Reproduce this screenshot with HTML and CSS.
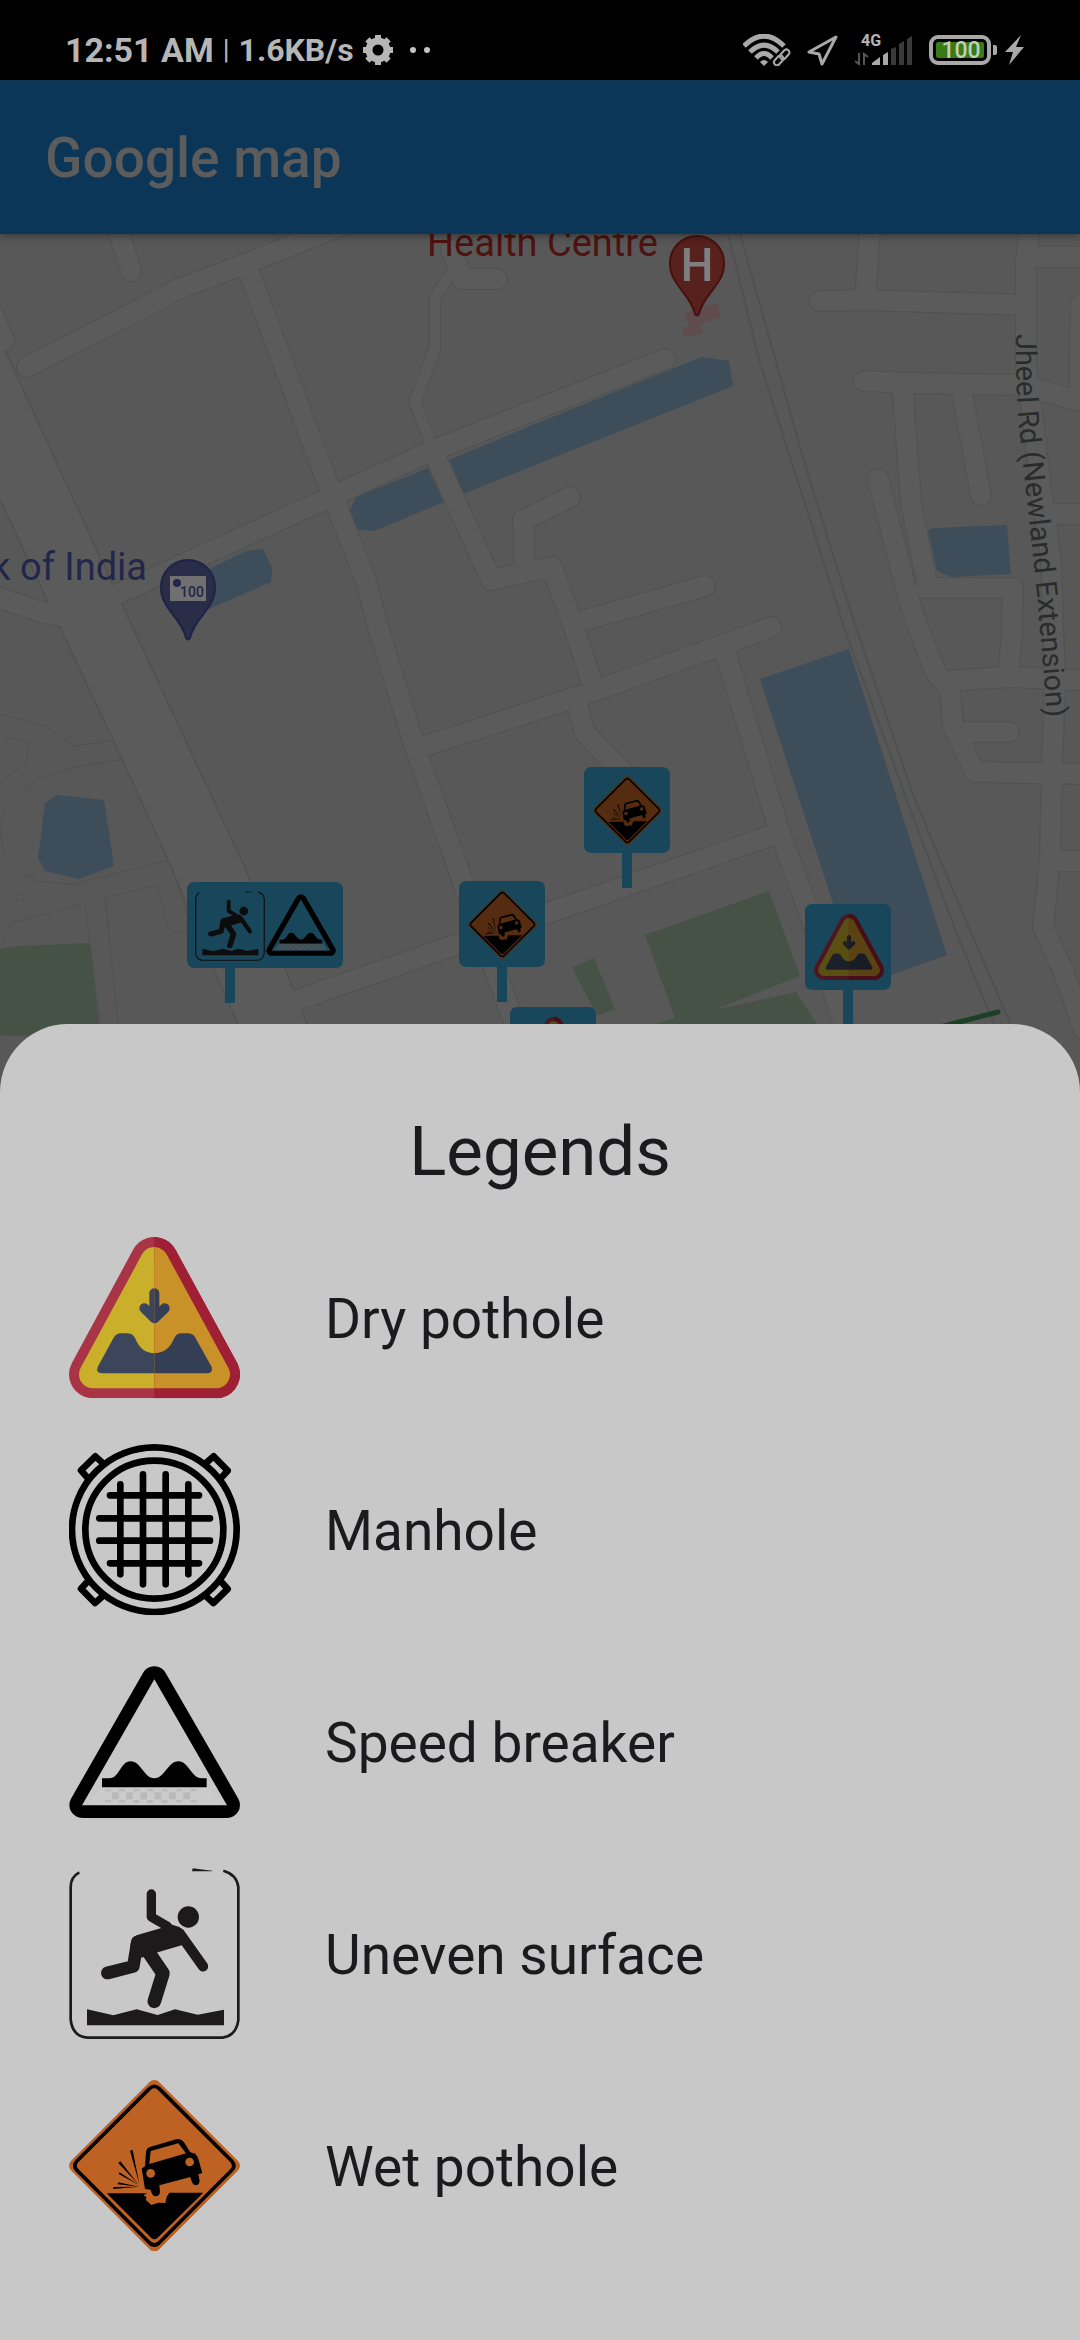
FILE: index.html
```html
<!DOCTYPE html>
<html lang="en">
<head>
<meta charset="utf-8">
<meta name="viewport" content="width=device-width, initial-scale=1">
<title>Google map</title>
<link rel="stylesheet" href="styles.css">
</head>
<body>
<svg class="sprite" aria-hidden="true">
  <defs>
    <clipPath id="right-half"><rect x="313" y="40" width="270" height="520"/></clipPath>
    <g id="dry-board">
      <path class="rim" d="M313 125L498 465H129Z" stroke-width="144"/>
      <path class="face" d="M313 125L498 465H129Z" stroke-width="84"/>
      <path class="ink" stroke="none" d="M155 462Q137 460 143 443L190 357Q198 342 213 342H233Q250 342 257 360C268 388 288 402 313 402S360 388 371 360Q378 342 393 342H413Q430 342 437 357L485 443Q490 460 472 462Z"/>
      <path class="ink" fill="none" stroke-width="30" stroke-linecap="round" d="M313 222V290M283 267L313 297L344 267"/>
    </g>
    <symbol id="dry" viewBox="57 53 513 484">
      <use href="#dry-board" class="tone-light"/>
      <g clip-path="url(#right-half)"><use href="#dry-board" class="tone-dark"/></g>
    </symbol>
    <symbol id="manhole" viewBox="57 44 513 514">
      <g fill="none" stroke="#000" stroke-width="20" stroke-linecap="round" stroke-linejoin="round">
        <circle cx="313" cy="301" r="247"/>
        <circle cx="313" cy="301" r="207"/>
        <path d="M180 198H447M148 267H480M148 334H480M180 402H447M211 165V435M279 135V465M347 135V465M415 165V435"/>
        <path id="lug" d="M468 101L491 81L533 124L511 148"/>
        <use href="#lug" transform="rotate(90 313 301)"/>
        <use href="#lug" transform="rotate(180 313 301)"/>
        <use href="#lug" transform="rotate(270 313 301)"/>
      </g>
    </symbol>
    <symbol id="speed" viewBox="57 47 513 457">
      <path fill="#cdcdcd" fill-opacity=".5" d="M150 412H478L508 464H110Z"/>
      <path fill="#b9b9b9" d="M186 426h20v21h-20zM228 426h20v21h-20zM271 426h20v21h-20zM314 426h20v21h-20zM357 426h20v21h-20zM400 426h20v21h-20zM165 417h18v6h-18zM207 417h18v6h-18zM250 417h18v6h-18zM292 417h18v6h-18zM335 417h18v6h-18zM378 417h18v6h-18zM422 417h18v6h-18zM165 449h18v7h-18zM207 449h18v7h-18zM250 449h18v9h-18zM292 449h18v9h-18zM335 449h18v9h-18zM378 449h18v7h-18zM422 449h18v7h-18z"/>
      <path fill-rule="evenodd" d="M279 68A39 39 0 0 1 347 68L565 445A39 39 0 0 1 531 503H97A39 39 0 0 1 63 445ZM313 87L96 465H531Z"/>
      <path d="M156 384H178C210 384 210 333 242 333S281 384 313 384S353 333 385 333S423 384 455 384H470V411H156Z"/>
    </symbol>
    <symbol id="uneven" viewBox="57 53 513 514">
      <g fill="none" stroke="#1c1a1b" stroke-linecap="round" stroke-linejoin="round">
        <path stroke-width="8" stroke-linecap="butt" d="M88 66Q62 80 62 110V508Q67 558 112 562H518Q558 556 565 510V110Q560 72 520 61"/>
        <path stroke-width="28" d="M304 131V200L352 228"/>
        <path stroke-width="31" d="M388 248L459 348"/>
        <path stroke-width="38" d="M262 275L250 348L172 368"/>
        <path stroke-width="41" d="M292 300L339 369L313 453"/>
      </g>
      <g fill="#1c1a1b">
        <circle cx="415" cy="200" r="32"/>
        <path d="M262 254L334 233L340 215L388 230L404 246L395 285L316 308L275 322L241 290Q243 260 262 254Z"/>
        <path d="M111 477L190 495L260 477L323 494L375 477L443 493L522 478V525H111Z"/>
        <path d="M428 54L486 61V63L426 63Z"/>
      </g>
    </symbol>
    <symbol id="wet" viewBox="57 59 513 514">
      <path fill="#be6224" stroke="#be6224" stroke-width="40" stroke-linejoin="round" d="M313 79L550 316L313 553L77 316Z"/>
      <path fill="none" stroke="#000" stroke-width="11" d="M299 84Q313 72 327 84L545 302Q558 316 545 330L327 548Q313 560 299 548L81 330Q68 316 81 302Z"/>
      <path d="M170 399H292L280 405L290 410L287 418L304 434L325 427L346 428L350 410L358 397H460L322 533Q313 540 304 533Z"/>
      <path d="M275 325L285 317L288 275Q290 262 302 259L378 237Q392 234 401 244L421 276L436 280L444 292L457 338L445 342L449 362Q447 375 436 375Q426 373 421 350L328 375L330 395Q328 408 316 408Q305 405 302 388L285 386Z"/>
      <g fill="#be6224">
        <path d="M302 272L385 249L408 279L298 311Z"/>
        <circle cx="302" cy="339" r="13"/>
        <circle cx="419" cy="305" r="13"/>
      </g>
      <path d="M240 271L248 269L268 372ZM205 308L211 303L266 373ZM206 341L209 336L266 374ZM203 372L205 366L268 379ZM190 386V380L268 379Z"/>
    </symbol>
  </defs>
</svg>

<header>
  <div class="status-bar">
    <span class="clock">12:51 AM</span>
    <span class="divider">|</span>
    <span class="speed-text">1.6KB/s</span>
    <svg class="gear" width="30" height="30" viewBox="0 0 30 30" aria-hidden="true">
      <circle cx="15" cy="15" r="9" fill="none" stroke="#b6b6b6" stroke-width="7"/>
      <g stroke="#b6b6b6" stroke-width="6"><path id="tooth" d="M15 0V5"/><use href="#tooth" transform="rotate(45 15 15)"/><use href="#tooth" transform="rotate(90 15 15)"/><use href="#tooth" transform="rotate(135 15 15)"/><use href="#tooth" transform="rotate(180 15 15)"/><use href="#tooth" transform="rotate(225 15 15)"/><use href="#tooth" transform="rotate(270 15 15)"/><use href="#tooth" transform="rotate(315 15 15)"/></g>
    </svg>
    <svg class="dots" width="22" height="8" viewBox="0 0 22 8" aria-hidden="true"><g fill="#c4c4c4"><circle cx="4" cy="4" r="3"/><circle cx="18" cy="4" r="3"/></g></svg>
    <div class="status-icons">
      <svg width="48" height="32" viewBox="0 0 48 32" role="img" aria-label="Wi-Fi">
        <g fill="none" stroke="#a9a9a9" stroke-width="5">
          <path d="M1 12Q21 -8 41 12"/><path d="M7 18Q21 4 35 18"/><path d="M13 24Q21 15 29 24"/>
        </g>
        <path fill="#a9a9a9" d="M17 28Q21 24 25 28L21 32Z"/>
        <g fill="none" stroke="#000" stroke-width="5"><rect x="35" y="19" width="12" height="6" rx="3" transform="rotate(-48 41 22)"/></g>
        <g fill="none" stroke="#a9a9a9" stroke-width="2"><rect x="36" y="17" width="11" height="6" rx="3" transform="rotate(-48 42 20)"/><rect x="30" y="23" width="11" height="6" rx="3" transform="rotate(-48 36 26)"/></g>
      </svg>
      <svg width="32" height="32" viewBox="0 0 32 32" role="img" aria-label="Location"><path fill="none" stroke="#a9a9a9" stroke-width="3" stroke-linejoin="round" d="M29 3L2 18L12 20L15 30Z"/></svg>
      <svg width="58" height="34" viewBox="0 -2 58 34" role="img" aria-label="4G signal">
        <text class="net-label" x="6" y="11">4G</text>
        <path fill="none" stroke="#565656" stroke-width="2" d="M4 18V29L0 26M9 30V19L13 22"/>
        <path fill="#a9a9a9" d="M17 30V28L25 22V30ZM28 30V20L33 17V30Z"/>
        <path fill="#3a3a3a" d="M36 30V14L41 12V30ZM44 30V9L49 6V30ZM52 30V4L57 1V30Z"/>
      </svg>
      <svg width="96" height="32" viewBox="0 0 96 32" role="img" aria-label="Battery 100, charging">
        <rect x="2" y="3" width="58" height="26" rx="7" fill="none" stroke="#a9a9a9" stroke-width="4"/>
        <rect x="7" y="8" width="48" height="16" rx="2" fill="#377a16"/>
        <path fill="#a9a9a9" d="M64 11H66Q68 11 68 13V19Q68 21 66 21H64ZM92 1L76 18H84L80 31L95 13H87Z"/>
        <text class="battery-label" x="32" y="24">100</text>
      </svg>
    </div>
  </div>
  <div class="app-bar"><h1>Google map</h1></div>
</header>

<main>
  <svg class="map" viewBox="0 234 1080 858" role="img" aria-label="Map with road hazard markers">
    <defs>
      <g id="streets">
        <path d="M27 367L181 288L248 263L340 226M115 220L131 271"/>
        <path d="M249 272L329 487L365 578L379 630L415 747L465 888L495 970L535 1080"/>
        <path d="M100 602L324 500L427 453L540 408L665 359M-20 285L4 340"/>
        <path d="M463 279H497M451 250L463 279M437 460L491 580L552 567L575 630L592 683"/>
        <path d="M525 570L523 520L570 497M582 621L705 586M0 598L45 613L80 620"/>
        <path d="M425 746L592 692L736 640L771 627M726 655L779 830L812 920L860 1080"/>
        <path d="M578 708L585 733L640 790M297 1000L458 944L545 914L776 834"/>
        <path d="M870 230L865 300M820 301L865 300L1026 305M1029 230L1026 263V363L1040 480L1051 560L1053 630L1055 677L1052 773L1050 857L1043 927L1063 970L1084 1030"/>
        <path d="M1036 257H1100M1081 305L1079 400M864 381L915 383L1022 385L1090 404"/>
        <path d="M903 392L911 503L927 583M962 393L981 495M878 479L908 597L919 630L936 673L950 690L953 727L975 772L1100 774"/>
        <path d="M925 588L1013 588L1012 630L1009 670M946 681L1008 677L1100 681M965 732H1009M1053 514H1100M1053 861H1100"/>
      </g>
      <path id="lane" d="M449 277L435 297V348L415 402L432 446"/>
      <path id="avenue" d="M5 352L111 583L133 630L243 865L250 882L293 991L320 1060L255 1060L215 970L169 860L114 740L62 630L0 498L-20 460V330Z"/>
    </defs>
    <rect class="ground" y="234" width="1080" height="858"/>
    <g class="edge">
      <path d="M0 714L46 726L75 746L114 740M0 735L30 743L25 764L0 783M123 759L76 767L38 779L8 803L0 825L3 850L15 869L37 881L74 884L169 860M0 948L12 923L85 903L105 1060M122 1060L105 898L156 885L168 925Q172 934 180 933T187 920M176 878L187 915M16 893L26 898L16 901Z"/>
    </g>
    <g class="water">
      <path d="M356 497L428 468L444 502L374 531L357 529L350 510Z"/>
      <path d="M449 460L540 422L702 357L729 361L733 386L540 463L463 494Z"/>
      <path d="M207 570L246 551L263 549L272 568L271 582L207 610Z"/>
      <path d="M928 530L934 528L1007 525L1011 574L951 577L937 571Z"/>
      <path d="M45 803L57 795L104 800L114 866L79 879L45 871L38 858Z"/>
      <path d="M760 679L849 649L947 955L860 986Z"/>
    </g>
    <g class="park">
      <path d="M0 949L17 946L90 943L99 1024L103 1040L0 1035Z"/>
      <path d="M645 935L769 891L800 976L714 1010L796 992L830 1044L655 1044V1024L675 1018Z"/>
      <path d="M572 967L594 958L615 1009L597 1016Z"/>
    </g>
    <path class="clinic" d="M685 313L717 303L721 317L699 324L703 333L685 338L682 328L689 326Z"/>
    <use href="#avenue" class="casing avenue"/>
    <use href="#lane" class="casing lane"/>
    <use href="#streets" class="casing street"/>
    <use href="#avenue" class="surface avenue"/>
    <use href="#lane" class="surface lane"/>
    <use href="#streets" class="surface street"/>
    <g class="rail">
      <path d="M728 234L760 363L806 507L845 630L905 795L958 937L1005 1050"/>
      <path d="M740 234L762 312L803 458L848 603L857 630L913 795L972 935L1022 1050"/>
    </g>
    <path class="trail" d="M940 1027L998 1012"/>

    <g class="hospital">
      <text class="place" x="427" y="256">Health Centre</text>
      <path class="pin" d="M697 236A27 27 0 0 1 724 264C724 285 703 294 699 314Q697 317 695 314C691 294 670 285 670 264A27 27 0 0 1 697 236Z"/>
      <text class="pin-letter" x="697" y="281">H</text>
    </g>
    <g class="bank">
      <text class="place" x="147" y="580" text-anchor="end">k of India</text>
      <path class="pin" d="M188 560A27 27 0 0 1 215 588C215 609 194 618 190 638Q188 641 186 638C182 618 161 609 161 588A27 27 0 0 1 188 560Z"/>
      <rect x="170" y="576" width="36" height="25" fill="#707070"/>
      <circle cx="177" cy="583" r="4"/>
      <text class="note" x="180" y="597">100</text>
    </g>
    <path id="jheel" fill="none" d="M1016 334Q1015 380 1019 427L1037 593L1049 740"/>
    <text class="road-name"><textPath href="#jheel">Jheel Rd (Newland Extension)</textPath></text>

    <g class="sign">
      <path d="M195 882H335Q343 882 343 890V960Q343 968 335 968H235V1003H225V968H195Q187 968 187 960V890Q187 882 195 882Z"/>
      <use href="#uneven" x="195" y="891" width="70" height="70"/>
      <use href="#speed" x="266" y="894" width="70" height="62"/>
    </g>
    <g class="sign">
      <path d="M467 881H537Q545 881 545 889V959Q545 967 537 967H507V1002H497V967H467Q459 967 459 959V889Q459 881 467 881Z"/>
      <use href="#wet" x="468" y="890" width="69" height="69"/>
    </g>
    <g class="sign">
      <path d="M592 767H662Q670 767 670 775V845Q670 853 662 853H632V888H622V853H592Q584 853 584 845V775Q584 767 592 767Z"/>
      <use href="#wet" x="593" y="776" width="69" height="69"/>
    </g>
    <g class="sign">
      <path d="M813 904H883Q891 904 891 912V982Q891 990 883 990H853V1025H843V990H813Q805 990 805 982V912Q805 904 813 904Z"/>
      <use href="#dry" x="814" y="914" width="70" height="66"/>
    </g>
    <g class="sign">
      <path d="M518 1007H588Q596 1007 596 1015V1085H510V1015Q510 1007 518 1007Z"/>
      <use href="#dry" x="519" y="1017" width="70" height="66"/>
    </g>
  </svg>

  <section class="sheet" aria-labelledby="legends">
    <h2 id="legends">Legends</h2>
    <ul>
      <li><svg viewBox="0 0 513 484" aria-hidden="true"><use href="#dry" width="513" height="484"/></svg><span>Dry pothole</span></li>
      <li><svg viewBox="0 0 513 514" aria-hidden="true"><use href="#manhole" width="513" height="514"/></svg><span>Manhole</span></li>
      <li><svg viewBox="0 0 513 457" aria-hidden="true"><use href="#speed" width="513" height="457"/></svg><span>Speed breaker</span></li>
      <li><svg viewBox="0 0 513 514" aria-hidden="true"><use href="#uneven" width="513" height="514"/></svg><span>Uneven surface</span></li>
      <li><svg viewBox="0 0 513 514" aria-hidden="true"><use href="#wet" width="513" height="514"/></svg><span>Wet pothole</span></li>
    </ul>
  </section>
</main>
</body>
</html>
```
FILE: styles.css
```css
* {
  box-sizing: border-box;
}

body {
  margin: 0;
  min-height: 100vh;
  display: flex;
  flex-direction: column;
  background: #585858;
  color: #1b1b1d;
  font-family: Roboto, "Liberation Sans", sans-serif;
  overflow-x: hidden;
}

.sprite {
  position: absolute;
  width: 0;
  height: 0;
}

/* Top bars */
header {
  position: relative;
  z-index: 1;
  box-shadow: 0 2px 8px rgba(0, 0, 0, 0.4);
}

.status-bar {
  display: flex;
  align-items: center;
  height: 80px;
  padding: 20px 55px 0 65px;
  background: #000;
  color: #b6b6b6;
  font-weight: 700;
  line-height: 40px;
  white-space: nowrap;
}

.clock {
  font-size: 34px;
}

.divider {
  margin: 0 9px;
  font-size: 28px;
  font-weight: 400;
}

.speed-text {
  font-size: 32px;
}

.gear {
  margin-left: 9px;
}

.dots {
  margin-left: 16px;
}

.status-icons {
  display: flex;
  align-items: center;
  gap: 16px;
  margin-left: auto;
}

.net-label {
  fill: #b6b6b6;
  font-size: 16px;
  font-weight: 700;
}

.battery-label {
  fill: #bfcfb8;
  font-size: 23px;
  font-weight: 500;
  text-anchor: middle;
}

.app-bar {
  display: flex;
  align-items: center;
  height: 154px;
  padding: 2px 45px 0;
  background: #0c3657;
}

.app-bar h1 {
  margin: 0;
  color: #5c5c5c;
  font-size: 55px;
  font-weight: 500;
  line-height: 64px;
}

/* Map */
main {
  flex: 1;
  display: flex;
  flex-direction: column;
}

.map {
  display: block;
  width: 100%;
  flex: none;
}

.ground {
  fill: #585858;
}

.edge,
.casing {
  fill: none;
  stroke: #505151;
}

.surface {
  fill: none;
  stroke: #5b5b5b;
}

.street,
.lane {
  stroke-linecap: round;
  stroke-linejoin: round;
}

.casing.street {
  stroke-width: 22px;
}

.surface.street {
  stroke-width: 20px;
}

.casing.lane {
  stroke-width: 13px;
}

.surface.lane {
  stroke-width: 11px;
}

.casing.avenue {
  stroke-width: 3px;
}

.surface.avenue {
  fill: #5b5b5b;
  stroke: none;
}

.water {
  fill: #3d4d59;
}

.park {
  fill: #475246;
}

.clinic {
  fill: #604c4c;
}

.rail {
  fill: none;
  stroke: #4f5151;
  stroke-width: 2px;
}

.trail {
  stroke: #1c4026;
  stroke-width: 5px;
  stroke-linecap: round;
}

.place {
  font-size: 38px;
}

.hospital {
  fill: #4f1210;
}

.hospital .pin {
  fill: #57211d;
  stroke: #48110e;
  stroke-width: 2px;
}

.pin-letter {
  fill: #808080;
  font-size: 46px;
  font-weight: 500;
  text-anchor: middle;
}

.bank {
  fill: #22264a;
}

.bank .pin {
  fill: #292d48;
  stroke: #1f2345;
  stroke-width: 2px;
}

.note {
  font-size: 14px;
  font-weight: 500;
}

.road-name {
  fill: #2a2c2c;
  font-size: 29px;
}

.sign path {
  fill: #18465a;
}

.sign use {
  filter: brightness(0.45);
}

/* Two-tone warning board */
.tone-light {
  --rim: #a83446;
  --face: #c9af2a;
  --ink: #3b465d;
}

.tone-dark {
  --rim: #9f1f34;
  --face: #c89229;
  --ink: #343e54;
}

.rim,
.face {
  stroke-linejoin: round;
}

.rim {
  fill: var(--rim);
  stroke: var(--rim);
}

.face {
  fill: var(--face);
  stroke: var(--face);
}

.ink {
  fill: var(--ink);
  stroke: var(--ink);
  stroke-linejoin: round;
}

path.ink[fill="none"] {
  fill: none;
}

path.ink[stroke="none"] {
  stroke: none;
}

/* Legend sheet */
.sheet {
  position: relative;
  flex: 1;
  margin-top: -68px;
  padding: 88px 69px 67px;
  border-radius: 68px 68px 0 0;
  background: #c8c8c8;
}

.sheet h2 {
  margin: 0;
  font-size: 69px;
  font-weight: 400;
  line-height: 80px;
  text-align: center;
}

.sheet ul {
  margin: 20px 0 0;
  padding: 0;
  list-style: none;
}

.sheet li {
  display: flex;
  align-items: center;
  gap: 85px;
  height: 212px;
  font-size: 55px;
  line-height: 64px;
}

.sheet li span {
  padding-top: 2px;
}

.sheet li svg {
  flex: none;
  width: 171px;
}
```
